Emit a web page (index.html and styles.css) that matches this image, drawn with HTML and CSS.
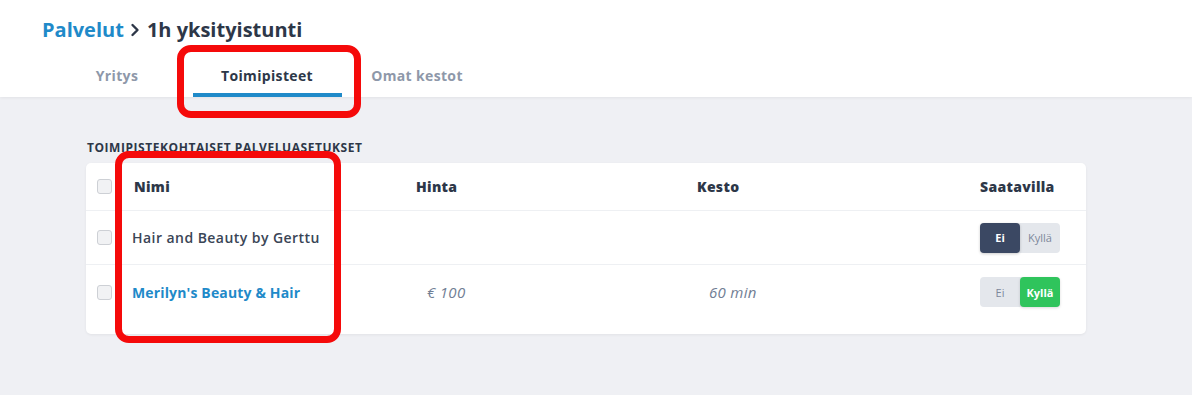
FILE: index.html
```html
<!DOCTYPE html>
<html lang="fi">
<head>
<meta charset="utf-8">
<title>1h yksityistunti</title>
<link rel="stylesheet" href="styles.css">
</head>
<body>
<header class="top">
  <h1 class="crumbs"><a class="crumb-link" href="#">Palvelut</a><svg class="chev" viewBox="0 0 10 14" width="10" height="14"><path d="M2.5 2 L7.5 7 L2.5 12" fill="none" stroke="#2d3748" stroke-width="2.4" stroke-linecap="round" stroke-linejoin="round"/></svg><span>1h yksityistunti</span></h1>
  <nav class="tabs">
    <a class="tab" href="#">Yritys</a>
    <a class="tab active" href="#">Toimipisteet</a>
    <a class="tab" href="#">Omat kestot</a>
  </nav>
</header>
<main class="main">
  <h2 class="section-label">Toimipistekohtaiset palveluasetukset</h2>
  <div class="card">
    <div class="row head">
      <span class="cb"></span>
      <span class="c-name">Nimi</span>
      <span class="c-price">Hinta</span>
      <span class="c-dur">Kesto</span>
      <span class="c-avail">Saatavilla</span>
    </div>
    <div class="row">
      <span class="cb"></span>
      <span class="c-name name">Hair and Beauty by Gerttu</span>
      <span class="c-price val"></span>
      <span class="c-dur val"></span>
      <span class="c-avail"><span class="toggle"><span class="seg on-dark">Ei</span><span class="seg">Kyllä</span></span></span>
    </div>
    <div class="row last">
      <span class="cb"></span>
      <span class="c-name name link">Merilyn's Beauty &amp; Hair</span>
      <span class="c-price val">€ 100</span>
      <span class="c-dur val">60 min</span>
      <span class="c-avail"><span class="toggle"><span class="seg">Ei</span><span class="seg on-green">Kyllä</span></span></span>
    </div>
  </div>
</main>
<div class="mark mark-tab"></div>
<div class="mark mark-name"></div>
</body>
</html>
```
FILE: styles.css
```css
* { box-sizing: border-box; }
html, body { margin: 0; padding: 0; }
body {
  width: 1192px;
  height: 395px;
  overflow: hidden;
  background: #eff0f4;
  font-family: "Open Sans", "Liberation Sans", sans-serif;
  color: #2d3748;
  position: relative;
}
.top {
  background: #fff;
  height: 97px;
  padding: 14px 0 0 42px;
  box-shadow: 0 1px 3px rgba(0,0,0,0.06);
  display: flex;
  flex-direction: column;
}
.crumbs {
  margin: 0;
  font-size: 20px;
  font-weight: 700;
  line-height: 32px;
  display: flex;
  align-items: center;
  color: #2d3748;
}
.crumb-link { color: #1f8ac9; text-decoration: none; }
.chev { margin: 0 7px 0 6px; }
.tabs {
  display: flex;
  margin-top: 12px;
}
.tab {
  width: 150px;
  text-align: center;
  font-size: 14px;
  letter-spacing: 0.35px;
  font-weight: 700;
  color: #8e98a9;
  text-decoration: none;
  height: 39px;
  padding-top: 8px;
}
.tab.active {
  color: #2d3748;
  position: relative;
}
.tab.active::after {
  content: "";
  position: absolute;
  left: 1px;
  right: 0;
  bottom: 0;
  height: 4px;
  background: #1f8ac9;
}
.main { padding: 43px 0 0 86px; }
.section-label {
  margin: 0 0 8px 1px;
  font-size: 12px;
  letter-spacing: 0.55px;
  font-weight: 700;
  text-transform: uppercase;
  line-height: 15px;
  color: #2d3748;
}
.card {
  width: 1000px;
  background: #fff;
  border-radius: 5px;
  box-shadow: 0 1px 3px rgba(0,0,0,0.06);
  padding-bottom: 15px;
}
.row {
  display: grid;
  grid-template-columns: 46px 284px 281px 1fr 106px;
  align-items: center;
  height: 54px;
  border-bottom: 1px solid #eef0f3;
  font-size: 14px;
}
.row.head { height: 48px; font-weight: 800; color: #2d3748; letter-spacing: 0.3px; }
.row.last { border-bottom: none; }
.cb {
  width: 15px; height: 15px;
  margin-left: 11px;
  border: 1px solid #cdd0d5;
  background: #f1f2f4;
  border-radius: 3px;
}
.head .c-name { padding-left: 2px; }
.name { font-weight: 600; color: #3a4556; letter-spacing: 0.45px; }
.link { color: #1f8ac9; font-weight: 700; letter-spacing: 0.15px; }
.val { font-style: italic; color: #717e94; font-size: 15px; letter-spacing: 0.3px; }
.c-price.val { padding-left: 11px; }
.c-dur.val { padding-left: 12px; }
.c-avail { text-align: right; padding-right: 36px; }
.row:not(.head) .c-avail { padding-right: 26px; display: flex; justify-content: flex-end; }
.toggle {
  display: flex;
  width: 80px;
  height: 30px;
  background: #e4e7ec;
  border-radius: 4px;
}
.seg {
  width: 40px;
  display: flex;
  align-items: center;
  justify-content: center;
  font-size: 11px;
  color: #7d889b;
  border-radius: 4px;
}
.seg.on-dark { background: #3b4863; color: #fff; font-weight: 700; box-shadow: 0 1px 3px rgba(0,0,0,0.2); }
.seg.on-green { background: #2fc45c; color: #fff; font-weight: 700; box-shadow: 0 1px 3px rgba(0,0,0,0.15); }
.mark {
  position: absolute;
  border: 7px solid #f50a0a;
  border-radius: 14px;
}
.mark-tab { left: 177px; top: 45px; width: 184px; height: 73px; }
.mark-name { left: 115px; top: 151px; width: 226px; height: 192px; }
```
